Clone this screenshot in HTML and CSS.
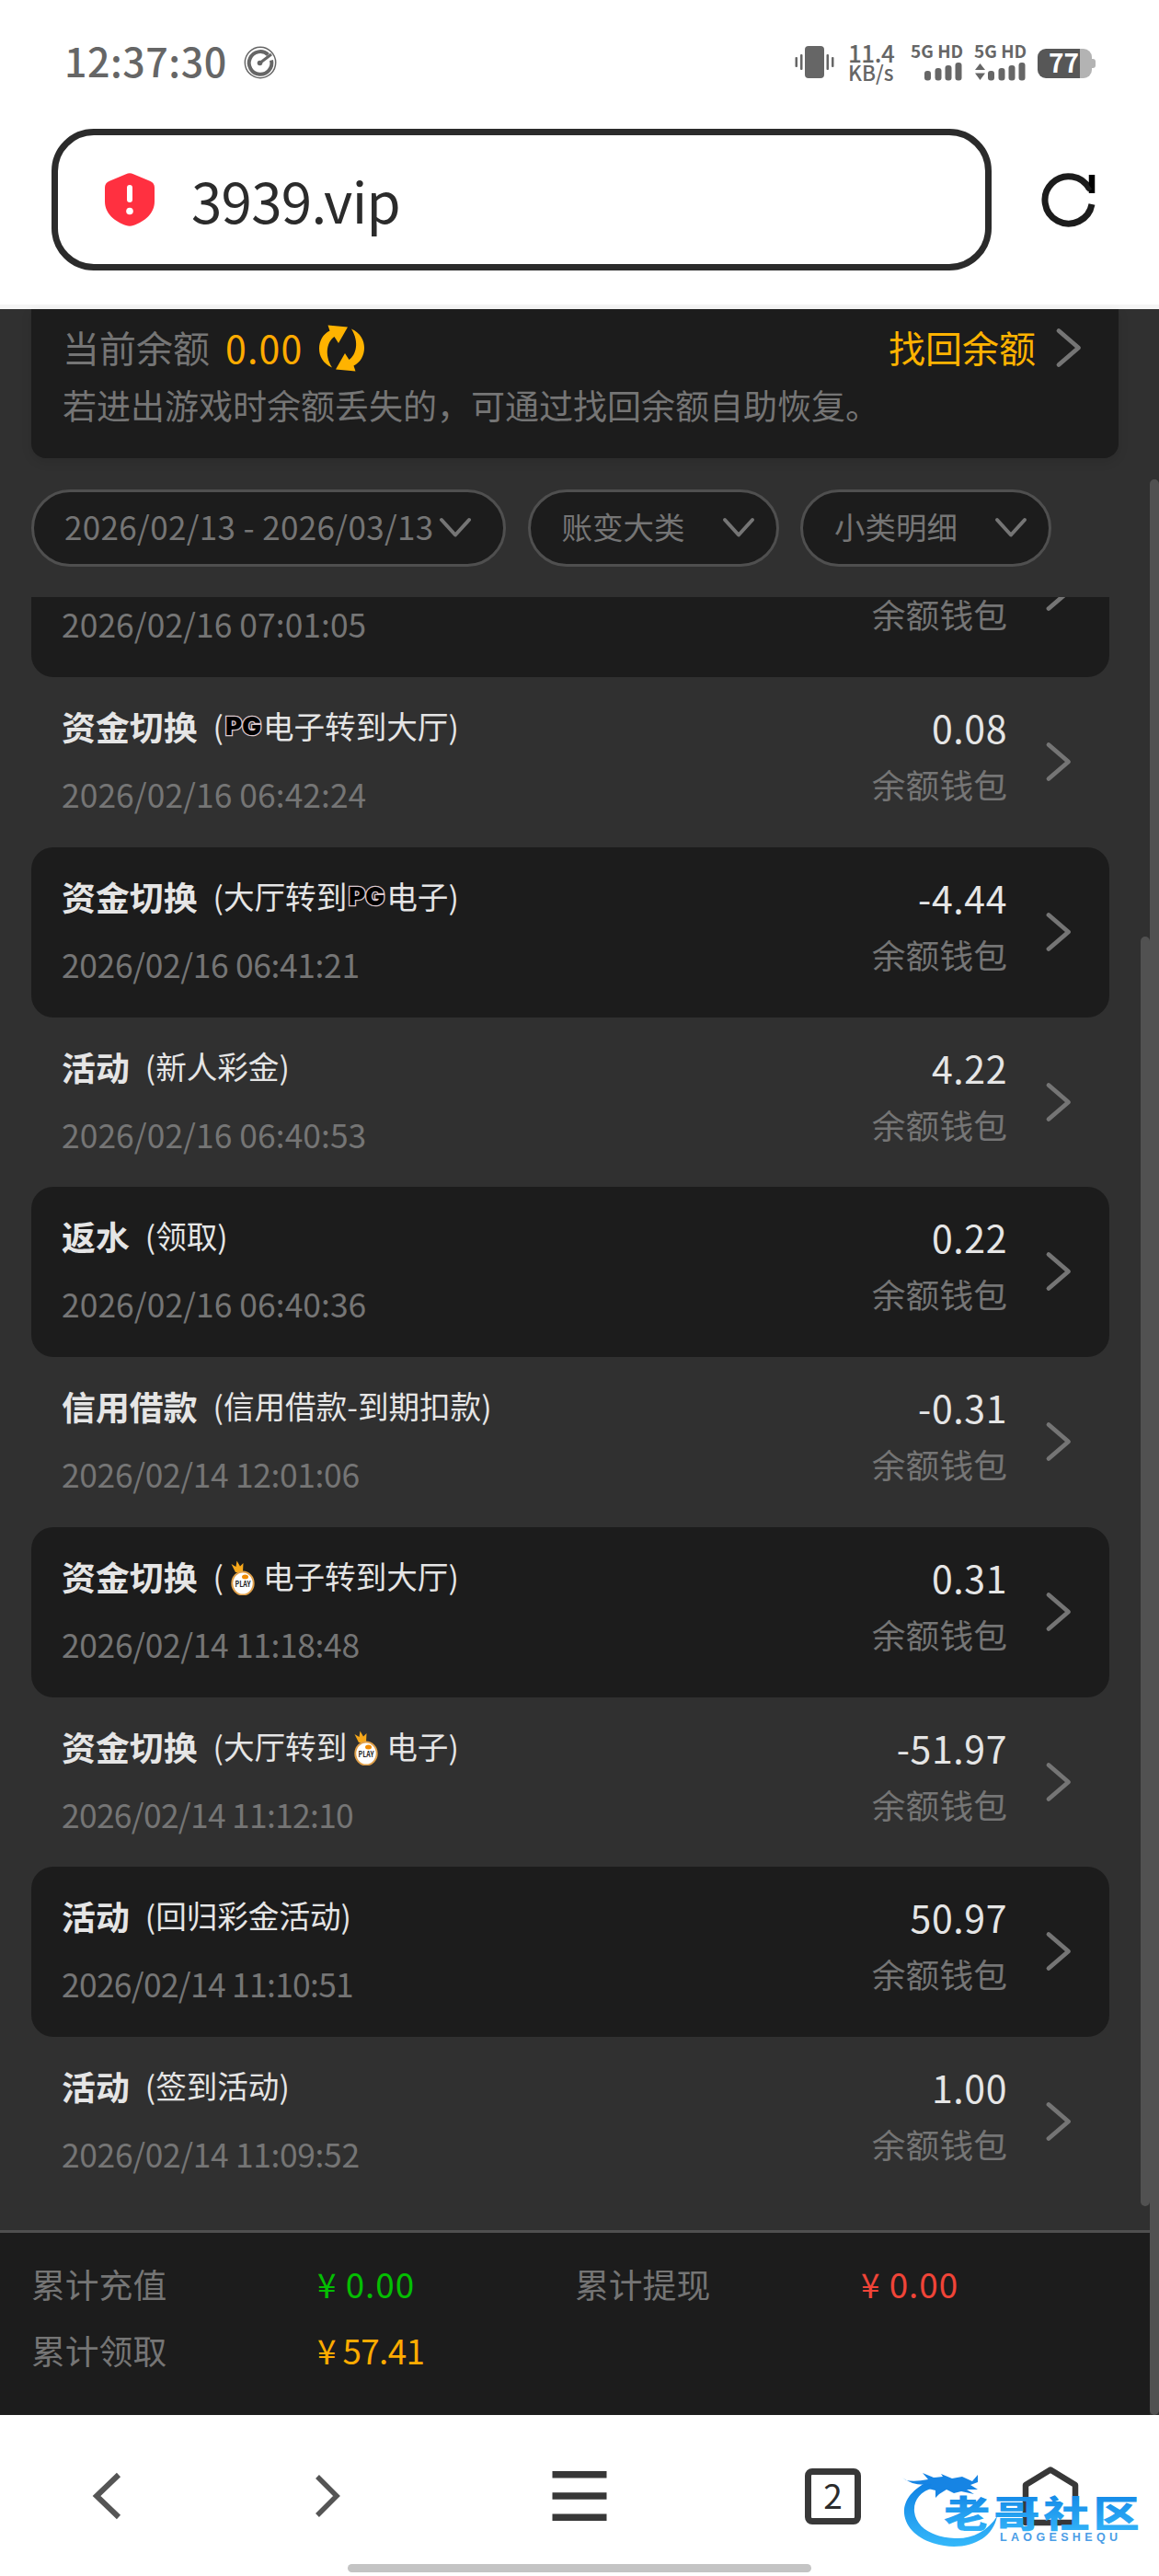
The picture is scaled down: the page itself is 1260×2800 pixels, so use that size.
FILE: index.html
```html
<!DOCTYPE html>
<html lang="zh-CN">
<head>
    <meta charset="UTF-8">
    <meta name="viewport" content="width=device-width, initial-scale=1.0">
    <title>账变明细</title>
    <link rel="stylesheet" href="styles.css">
</head>
<body>
    <svg class="defs">
        <symbol id="arrow" viewBox="0 0 32 48">
            <path d="M5 5.500L26.500 24L5 42.500" fill="none" stroke="currentColor" stroke-width="4.800" stroke-linecap="round" stroke-linejoin="round"/>
        </symbol>
        <symbol id="down" viewBox="0 0 36 24">
            <path d="M3 3L18 19.500L33 3" fill="none" stroke="currentColor" stroke-width="4" stroke-linecap="round" stroke-linejoin="round"/>
        </symbol>
    </svg>

    <div class="status-bar">
        <span class="time">12:37:30</span>
        <svg class="speed" width="36" height="36" viewBox="0 0 36 36">
            <circle cx="18" cy="18" r="16.700" fill="none" stroke="#666" stroke-width="1.500"/>
            <path d="M26.500 9.500A12.300 12.300 0 1 0 30 15.500" fill="none" stroke="#666" stroke-width="4"/>
            <path d="M17.500 18.500L30 9" stroke="#666" stroke-width="3"/>
            <circle cx="17.500" cy="18.500" r="2.800" fill="#666"/>
        </svg>
        <svg class="vibrate" width="43" height="36" viewBox="0 0 43 36" fill="#666">
            <rect x="11" y="0" width="21" height="35" rx="4"/>
            <rect x="0.500" y="12" width="2.500" height="11" rx="1"/>
            <rect x="6" y="9" width="2.500" height="17" rx="1"/>
            <rect x="34.500" y="9" width="2.500" height="17" rx="1"/>
            <rect x="40" y="12" width="2.500" height="11" rx="1"/>
        </svg>
        <div class="net">
            <span class="net-num">11.4</span>
            <span class="net-unit">KB/s</span>
        </div>
        <div class="signal">
            <span>5G HD</span>
            <svg width="58" height="20" viewBox="0 0 58 20" fill="#666">
                <rect x="15" y="9" width="7" height="10.500" rx="3"/>
                <rect x="26.500" y="6" width="7" height="13.500" rx="3"/>
                <rect x="37.500" y="3" width="7" height="16.500" rx="3"/>
                <rect x="48.500" y="0" width="7" height="19.500" rx="3"/>
            </svg>
        </div>
        <div class="signal">
            <span>5G HD</span>
            <svg width="58" height="20" viewBox="0 0 58 20" fill="#666">
                <path d="M1 8L6.500 1L12 8ZM1 11.500H12L6.500 19Z"/>
                <rect x="15" y="9" width="7" height="10.500" rx="3"/>
                <rect x="26.500" y="6" width="7" height="13.500" rx="3"/>
                <rect x="37.500" y="3" width="7" height="16.500" rx="3"/>
                <rect x="48.500" y="0" width="7" height="19.500" rx="3"/>
            </svg>
        </div>
        <div class="battery"><span>77</span></div>
    </div>

    <div class="browser-bar">
        <div class="address">
            <svg width="54" height="58" viewBox="0 0 54 58">
                <path d="M23 1.200Q27 -0.800 31 1.200L49.500 9Q54 11 54 16V31C54 44 43 53 31 57Q27 58.500 23 57C11 53 0 44 0 31V16Q0 11 4.500 9Z" fill="#ff3040"/>
                <rect x="24" y="13" width="6" height="19" rx="3" fill="#fff"/>
                <circle cx="27" cy="41.500" r="3.800" fill="#fff"/>
            </svg>
            <span>3939.vip</span>
        </div>
        <svg class="reload" width="60" height="60" viewBox="0 0 60 60">
            <path d="M52.500 18.500A25.700 25.700 0 1 0 55 35" fill="none" stroke="#1c1c1c" stroke-width="7"/>
            <path d="M55 3V23" stroke="#000" stroke-width="6.500"/>
            <path d="M46 10L53 20" stroke="#1c1c1c" stroke-width="5"/>
        </svg>
    </div>

    <div class="page">
        <div class="main">
            <div class="balance">
                <div class="balance-line">
                    <span class="label">当前余额</span>
                    <span class="money">0.00</span>
                    <svg class="refresh" width="49" height="51" viewBox="0 0 49 51" fill="#ffb300">
                        <path id="half" d="M14 46.500C4 42 0 34 0 26C0 18 4 10 11.500 6.500L9.500 0.500L31 2.500L21 20L16.500 13C9 18 5 32 14 46.500Z"/>
                        <use href="#half" transform="rotate(180 24.500 25.500)"/>
                    </svg>
                    <span class="recover">找回余额</span>
                    <svg class="go" width="32" height="48"><use href="#arrow"/></svg>
                </div>
                <p class="tip">若进出游戏时余额丢失的，可通过找回余额自助恢复。</p>
            </div>

            <div class="filters">
                <div class="filter date"><span>2026/02/13 - 2026/03/13</span><svg width="36" height="24"><use href="#down"/></svg></div>
                <div class="filter"><span>账变大类</span><svg width="36" height="24"><use href="#down"/></svg></div>
                <div class="filter"><span>小类明细</span><svg width="36" height="24"><use href="#down"/></svg></div>
            </div>

            <div class="list-wrap">
                <div class="list">
                    <div class="row">
                        <div class="info">
                            <div class="title"></div>
                            <div class="datetime">2026/02/16 07:01:05</div>
                        </div>
                        <div class="amount"><div class="num"></div><div class="wallet">余额钱包</div></div>
                        <svg class="arrow"><use href="#arrow"/></svg>
                    </div>
                    <div class="row">
                        <div class="info">
                            <div class="title"><b>资金切换</b><span>(<svg class="logo" viewBox="0 0 43 40"><text class="pg" x="2" y="29" textLength="39" lengthAdjust="spacingAndGlyphs">PG</text></svg>电子转到大厅)</span></div>
                            <div class="datetime">2026/02/16 06:42:24</div>
                        </div>
                        <div class="amount"><div class="num">0.08</div><div class="wallet">余额钱包</div></div>
                        <svg class="arrow"><use href="#arrow"/></svg>
                    </div>
                    <div class="row">
                        <div class="info">
                            <div class="title"><b>资金切换</b><span>(大厅转到<svg class="logo" viewBox="0 0 43 40"><text class="pg" x="2" y="29" textLength="39" lengthAdjust="spacingAndGlyphs">PG</text></svg>电子)</span></div>
                            <div class="datetime tight">2026/02/16 06:41:21</div>
                        </div>
                        <div class="amount"><div class="num">-4.44</div><div class="wallet">余额钱包</div></div>
                        <svg class="arrow"><use href="#arrow"/></svg>
                    </div>
                    <div class="row">
                        <div class="info">
                            <div class="title"><b>活动</b><span>(新人彩金)</span></div>
                            <div class="datetime">2026/02/16 06:40:53</div>
                        </div>
                        <div class="amount"><div class="num">4.22</div><div class="wallet">余额钱包</div></div>
                        <svg class="arrow"><use href="#arrow"/></svg>
                    </div>
                    <div class="row">
                        <div class="info">
                            <div class="title"><b>返水</b><span>(领取)</span></div>
                            <div class="datetime">2026/02/16 06:40:36</div>
                        </div>
                        <div class="amount"><div class="num">0.22</div><div class="wallet">余额钱包</div></div>
                        <svg class="arrow"><use href="#arrow"/></svg>
                    </div>
                    <div class="row">
                        <div class="info">
                            <div class="title"><b>信用借款</b><span>(信用借款-到期扣款)</span></div>
                            <div class="datetime tight">2026/02/14 12:01:06</div>
                        </div>
                        <div class="amount"><div class="num">-0.31</div><div class="wallet">余额钱包</div></div>
                        <svg class="arrow"><use href="#arrow"/></svg>
                    </div>
                    <div class="row">
                        <div class="info">
                            <div class="title"><b>资金切换</b><span>(<svg class="logo" viewBox="0 0 43 40">
                                <path d="M13 15L8.500 6L13.500 9L14.500 2.500L18 8.500L21.500 5L21 15Z" fill="#f7a81b"/>
                                <ellipse cx="21" cy="27" rx="11.700" ry="12.500" fill="#fff" stroke="#e0a04a" stroke-width="2"/>
                                <ellipse cx="23.500" cy="20" rx="3.500" ry="2.500" fill="#f08a00"/>
                                <text class="play" x="12.500" y="31" textLength="17" lengthAdjust="spacingAndGlyphs">PLAY</text>
                            </svg>电子转到大厅)</span></div>
                            <div class="datetime tight">2026/02/14 11:18:48</div>
                        </div>
                        <div class="amount"><div class="num">0.31</div><div class="wallet">余额钱包</div></div>
                        <svg class="arrow"><use href="#arrow"/></svg>
                    </div>
                    <div class="row">
                        <div class="info">
                            <div class="title"><b>资金切换</b><span>(大厅转到<svg class="logo" viewBox="0 0 43 40">
                                <path d="M13 15L8.500 6L13.500 9L14.500 2.500L18 8.500L21.500 5L21 15Z" fill="#f7a81b"/>
                                <ellipse cx="21" cy="27" rx="11.700" ry="12.500" fill="#fff" stroke="#e0a04a" stroke-width="2"/>
                                <ellipse cx="23.500" cy="20" rx="3.500" ry="2.500" fill="#f08a00"/>
                                <text class="play" x="12.500" y="31" textLength="17" lengthAdjust="spacingAndGlyphs">PLAY</text>
                            </svg>电子)</span></div>
                            <div class="datetime tighter">2026/02/14 11:12:10</div>
                        </div>
                        <div class="amount"><div class="num">-51.97</div><div class="wallet">余额钱包</div></div>
                        <svg class="arrow"><use href="#arrow"/></svg>
                    </div>
                    <div class="row">
                        <div class="info">
                            <div class="title"><b>活动</b><span>(回归彩金活动)</span></div>
                            <div class="datetime tighter">2026/02/14 11:10:51</div>
                        </div>
                        <div class="amount"><div class="num">50.97</div><div class="wallet">余额钱包</div></div>
                        <svg class="arrow"><use href="#arrow"/></svg>
                    </div>
                    <div class="row">
                        <div class="info">
                            <div class="title"><b>活动</b><span>(签到活动)</span></div>
                            <div class="datetime tight">2026/02/14 11:09:52</div>
                        </div>
                        <div class="amount"><div class="num">1.00</div><div class="wallet">余额钱包</div></div>
                        <svg class="arrow"><use href="#arrow"/></svg>
                    </div>
                </div>
                <div class="list-thumb"></div>
            </div>

            <div class="totals">
                <span>累计充值</span><span class="green">¥ 0.00</span>
                <span>累计提现</span><span class="red">¥ 0.00</span>
                <span>累计领取</span><span class="orange">¥ 57.41</span>
            </div>
        </div>
        <div class="page-thumb"></div>
    </div>

    <div class="nav">
        <svg width="36" height="60" viewBox="0 0 36 60"><path d="M29 7L5 30L29 53" fill="none" stroke="#555" stroke-width="6"/></svg>
        <svg width="32" height="52" viewBox="0 0 32 52"><path d="M4 5L25 26L4 47" fill="none" stroke="#555" stroke-width="5.500"/></svg>
        <svg width="60" height="56" viewBox="0 0 60 56" fill="#383838"><path d="M0.500 1H59.500V8.500H0.500ZM0.500 24.200H59.500V31.700H0.500ZM0.500 47.500H59.500V55H0.500Z"/></svg>
        <div class="tabs">2</div>
        <svg width="62" height="66" viewBox="0 0 62 66"><path d="M4 62V21L31 4.500L58 21V62Z" fill="none" stroke="#383838" stroke-width="6.500" stroke-linejoin="round"/></svg>
        <div class="home-line"></div>
        <svg class="watermark" width="270" height="96" viewBox="0 0 270 96">
            <defs>
                <linearGradient id="blue" x1="0" y1="0" x2="0" y2="1">
                    <stop offset="0" stop-color="#0e7fe3"/>
                    <stop offset="1" stop-color="#35b8fa"/>
                </linearGradient>
            </defs>
            <path d="M33 19C12 28 3 42 4 55C6 76 29 90 58 91C82 91 101 79 105 58C94 75 77 83 59 82C36 81 17 71 15 53C14 41 21 31 36 27Z" fill="url(#blue)"/>
            <path d="M2 16L6 19Q16 21 30 18L24 11L36 16L46 15L44 12L56 17L67 15L78 20L84 13V21L76 24L84 29L72 29L80 34L66 31L58 33L50 29L42 34L38 38L38 30L30 28L34 23Q14 26 2 16Z" fill="#1684e4"/>
            <text class="wm-name" x="0" y="0" transform="translate(47 70) scale(1.260 1)" fill="url(#blue)">老哥社区</text>
            <text class="wm-sub" x="108" y="84.500" textLength="128">LAOGESHEQU</text>
        </svg>
    </div>
</body>
</html>
```
FILE: styles.css
```css
* {
    box-sizing: border-box;
}

body {
    width: 1260px;
    height: 2800px;
    margin: 0;
    overflow: hidden;
    background-color: #fff;
    font-family: "Noto Sans CJK SC", sans-serif;
    color: #757575;
}

svg {
    display: block;
    flex: none;
}

.defs {
    position: absolute;
    width: 0;
    height: 0;
}

/* status bar */
.status-bar {
    display: flex;
    align-items: flex-start;
    height: 140px;
    padding: 48px 70px 0 70px;
    color: #666;
    white-space: nowrap;
}

.time {
    width: 195px;
    font-size: 43px;
    font-weight: 500;
    line-height: 34px;
    letter-spacing: 0.5px;
}

.speed {
    margin-top: 2px;
}

.vibrate {
    margin: 2px 0 0 563px;
}

.net {
    display: flex;
    flex-direction: column;
    width: 68px;
    margin-left: 15px;
    font-weight: 500;
}

.net-num {
    font-size: 26px;
    line-height: 18px;
    letter-spacing: -0.5px;
}

.net-unit {
    font-size: 22.5px;
    line-height: 22px;
    margin-top: 1px;
}

.signal {
    width: 69px;
    font-size: 19px;
    font-weight: 700;
    line-height: 14px;
}

.signal svg {
    margin-top: 6px;
}

.signal span {
    display: block;
}

.battery {
    position: relative;
    width: 59px;
    height: 32px;
    margin-top: 5px;
    border-radius: 9px;
    background: linear-gradient(90deg, #575757 46px, #b3b3b3 46px);
    color: #fff;
    font-size: 28px;
    font-weight: 700;
    line-height: 29px;
    padding-left: 12px;
}

.battery::after {
    content: "";
    position: absolute;
    left: 59px;
    top: 11px;
    width: 4px;
    height: 10px;
    border-radius: 0 3px 3px 0;
    background-color: #b3b3b3;
}

/* address bar */
.browser-bar {
    display: flex;
    height: 196px;
    padding-left: 56px;
    border-bottom: 5px solid #f5f5f5;
}

.address {
    display: flex;
    align-items: center;
    width: 1022px;
    height: 154px;
    padding-left: 51px;
    border: 7px solid #2b2b2b;
    border-radius: 46px;
    color: #2b2b2b;
    font-size: 60px;
}

.address span {
    margin-left: 40px;
    line-height: 80px;
    letter-spacing: -0.7px;
}

.reload {
    margin: 47px 0 0 54px;
}

/* web page */
.page {
    display: flex;
    height: 2289px;
    background-color: #303030;
}

.main {
    width: 1250px;
}

.page-thumb {
    width: 10px;
    height: 2104px;
    margin-top: 185px;
    border-radius: 5px;
    background-color: #515151;
}

.balance {
    width: 1182px;
    height: 162px;
    margin-left: 34px;
    padding: 16px 38px 0 34px;
    border-radius: 0 0 16px 16px;
    background-color: #1c1c1c;
    box-shadow: 0 4px 12px rgba(0, 0, 0, 0.1);
}

.balance-line {
    display: flex;
    align-items: center;
    height: 52px;
    font-size: 40px;
}

.balance-line span {
    padding-bottom: 3px;
}

.money {
    margin-left: 17px;
    color: #ffab00;
    font-size: 41px;
    letter-spacing: 1.2px;
}

.refresh {
    margin-left: 18px;
}

.recover {
    margin-left: auto;
    color: #ffb300;
}

.go {
    margin-left: 20px;
}

.tip {
    margin: 10px 0 0;
    font-size: 37px;
    line-height: 52px;
    white-space: nowrap;
}

.filters {
    display: flex;
    gap: 23.5px;
    padding: 34px 0 0 34px;
}

.filter {
    display: flex;
    align-items: center;
    justify-content: space-between;
    width: 273px;
    height: 84px;
    padding: 0 23px 0 34px;
    border: 3px solid #4f4f4f;
    border-radius: 42px;
    background-color: #1c1c1c;
    font-size: 33.5px;
    white-space: nowrap;
}

.filter span {
    padding-bottom: 5px;
}

.filter.date {
    width: 516px;
    padding: 0 34px 0 33px;
    font-size: 35px;
    letter-spacing: 0.35px;
}

.list-wrap {
    display: flex;
    height: 1775px;
    margin-top: 33px;
    padding-left: 34px;
    overflow: hidden;
}

.list {
    width: 1172px;
    margin-top: -97.75px;
}

.row {
    display: flex;
    height: 184.75px;
    padding: 0 39px 0 33px;
    border-radius: 24px;
}

.row:nth-child(odd) {
    background-color: #1c1c1c;
}

.info {
    flex: 1;
    padding-top: 28px;
}

.title {
    display: flex;
    height: 50px;
    color: #e5e5e5;
    font-size: 33.6px;
    line-height: 50px;
}

.title b {
    margin-right: 17px;
    font-size: 36.9px;
}

.title span {
    display: flex;
}

/* game vendor logos */
.logo {
    width: 43px;
    height: 40px;
    margin-top: 6px;
}

.pg {
    font: 900 27px "Inter", sans-serif;
    fill: #000;
    stroke: #ddc9cf;
    stroke-width: 2.6px;
    paint-order: stroke;
}

.play {
    font-size: 9px;
    font-weight: 700;
    fill: #222;
}

.datetime {
    margin-top: 24px;
    font-size: 35.4px;
    line-height: 50px;
    letter-spacing: 0.05px;
}

.tight {
    letter-spacing: -0.35px;
}

.tighter {
    letter-spacing: -0.7px;
}

.amount {
    padding-top: 29px;
    text-align: right;
    font-size: 36.8px;
    line-height: 50px;
}

.num {
    height: 50px;
    margin-bottom: 12px;
    color: #e5e5e5;
    font-size: 41px;
    letter-spacing: 0.6px;
}

.arrow {
    width: 32px;
    height: 48px;
    margin: 68px 0 0 40px;
}

.list-thumb {
    width: 10px;
    height: 1380px;
    margin: 369px 0 0 34px;
    border-radius: 5px;
    background-color: #515151;
}

.totals {
    display: grid;
    grid-template-columns: 311px 280px 311px 1fr;
    grid-auto-rows: 72px;
    height: 201px;
    padding: 19px 0 0 34px;
    border-top: 3px solid #4f4f4f;
    background-color: #1c1c1c;
    font-size: 36.8px;
    line-height: 72px;
}

.green {
    color: #04be02;
    letter-spacing: 1px;
}

.red {
    color: #f04438;
    letter-spacing: 1px;
}

.orange {
    color: #ffab00;
    letter-spacing: -0.6px;
}

/* bottom toolbar */
.nav {
    position: relative;
    display: grid;
    grid-template-columns: 241px 259px 275px 236px 1fr;
    align-items: center;
    height: 175px;
    padding: 0 0 0 100px;
}

.nav > svg,
.tabs {
    margin-bottom: -1px;
}

.tabs {
    width: 61px;
    height: 61px;
    border: 7px solid #383838;
    border-radius: 8px;
    color: #2b2b2b;
    font-size: 37px;
    line-height: 43px;
    text-align: center;
}

.home-line {
    position: absolute;
    left: 378px;
    bottom: 4px;
    width: 504px;
    height: 9px;
    border-radius: 5px;
    background-color: #c4c4c4;
}

.watermark {
    position: absolute;
    left: 979px;
    top: 52px;
}

.wm-name {
    font-size: 40px;
    font-weight: 900;
    letter-spacing: 3px;
}

.wm-sub {
    font-family: "Liberation Sans", sans-serif;
    font-size: 12.5px;
    font-weight: 700;
    fill: #4a9de6;
}
```
